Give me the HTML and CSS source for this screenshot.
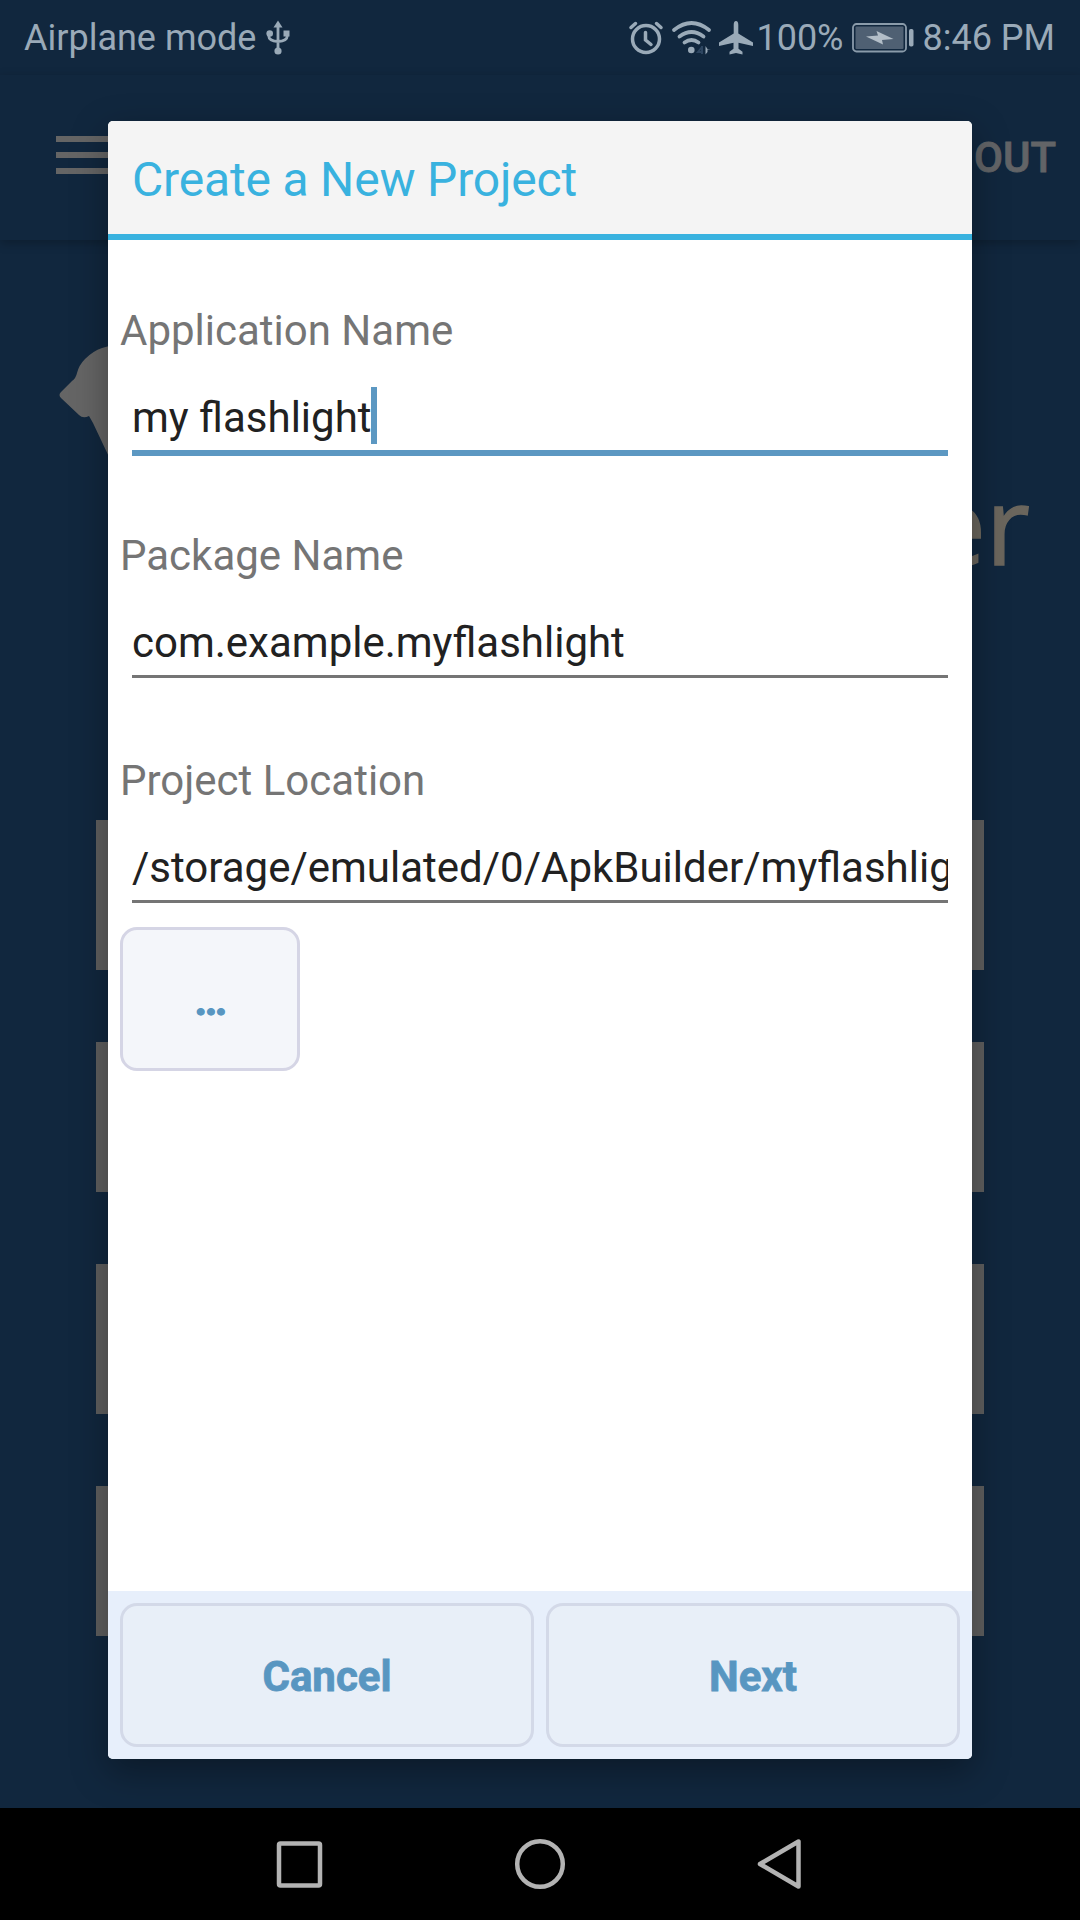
FILE: index.html
```html
<!DOCTYPE html>
<html>
  <head>
    <meta http-equiv="Content-type" content="text/html; charset=utf-8" />
    <meta name="viewport" content="width=device-width" />
    <title>Create a New Project</title>
    <link rel="stylesheet" href="styles.css">
  </head>
  <body>
    <div class="screen">
      <div class="statusbar">
        <span class="carrier">Airplane mode</span>
        <svg class="usb" width="24" height="36" viewBox="0 0 24 36">
          <path d="M12 5V30M2.800 13v3q0 5 9.200 5.500M21.200 13v3q0 5-9.200 5.500" fill="none" stroke="#9aaab8" stroke-width="2.800"/>
          <path d="M12 .5l4.500 7h-9z"/><circle cx="12" cy="31" r="3.600"/><circle cx="3.700" cy="13.500" r="3.300"/><path d="M17.500 10.500h6v6h-6z"/>
        </svg>
        <div class="spacer"></div>
        <svg class="alarm" width="34" height="34" viewBox="0 0 34 34">
          <g fill="none" stroke="#9aaab8" stroke-linecap="round">
            <circle cx="17" cy="18" r="13.500" stroke-width="3.500"/>
            <path d="M16.500 11.500v7.500l5.500 4.500" stroke-width="3.500"/>
            <path d="M2 6.500l4.500-4M32 6.500l-4.500-4" stroke-width="3.500"/>
          </g>
        </svg>
        <svg class="wifi" width="40" height="34" viewBox="0 0 40 34">
          <g fill="none" stroke="#9aaab8" stroke-width="3.800" stroke-linecap="round">
            <path d="M2 9Q19.500-5 37 9"/><path d="M7.500 15.500q12-9 24 0"/><path d="M12.500 21.500q7-5 14 0"/>
          </g>
          <circle cx="19.300" cy="29" r="3.300"/>
          <path d="M33.500 25v8.500l2-2.500v-2.500h3.500l-3.500-.5z"/>
          <path d="M30 25v8M30 26l-4 5h5" fill="none" stroke="#2d4560" stroke-width="2"/>
        </svg>
        <svg class="plane" width="34" height="34" viewBox="0 0 34 34">
          <path d="M17 0q2.300 0 2.300 4v8.500L34 21.500v3.500l-14.500-3.200v6l4 3V33.500L17 32l-6.500 1.500v-2.700l4-3v-6L0 25v-3.500l14.700-9V4q0-4 2.300-4z"/>
        </svg>
        <span class="percent">100%</span>
        <svg class="battery" width="62" height="30" viewBox="0 0 62 30">
          <rect x="1" y="1" width="53" height="27.500" rx="3.500" fill="none" stroke="#8a9baa" stroke-width="1.800"/>
          <rect x="3.500" y="3.500" width="48" height="22.500" rx="1" fill="#4f6073"/>
          <path d="M14 13.500l12-1-1.500-4.500 17 8-11.500 1 1 4.500z" fill="#b3bec8"/>
          <rect x="57" y="6" width="4.500" height="17.500" rx="1.800"/>
        </svg>
        <span class="clock">8:46 PM</span>
      </div>

      <div class="toolbar">
        <div class="menu"><i></i><i></i><i></i></div>
        <span class="action">OUT</span>
      </div>

      <div class="hero">
        <svg class="logo" width="60" height="130" viewBox="0 0 60 130">
          <path d="M60 -4L42 1Q33 4 25 12Q19 18 17 26Q16 31 12 34L1 45Q-2 48 1 51L19 68Q23 72 29 69L33 76L50 112L60 142z"/>
        </svg>
        <span class="brand">er</span>
      </div>

      <div class="tiles">
        <div class="tile"></div>
        <div class="tile"></div>
        <div class="tile"></div>
        <div class="tile"></div>
      </div>

      <div class="navbar">
        <svg width="52" height="52" viewBox="0 0 52 52"><rect x="5" y="5.500" width="41" height="42" rx="1.500"/></svg>
        <svg width="52" height="52" viewBox="0 0 52 52"><circle cx="26" cy="26" r="22.800"/></svg>
        <svg width="52" height="52" viewBox="0 0 52 52"><path d="M44.500 3.500V48.500L6 26z"/></svg>
      </div>

      <!-- new project dialog -->
      <div class="dialog">
        <div class="dialog-title">Create a New Project</div>
        <div class="dialog-body">
          <div class="field">
            <div class="label">Application Name</div>
            <div class="input focus">my flashlight<span class="caret"></span></div>
          </div>
          <div class="field">
            <div class="label">Package Name</div>
            <div class="input">com.example.myflashlight</div>
          </div>
          <div class="field">
            <div class="label">Project Location</div>
            <div class="input">/storage/emulated/0/ApkBuilder/myflashlig</div>
          </div>
          <button class="browse">...</button>
        </div>
        <div class="dialog-buttons">
          <button>Cancel</button>
          <button>Next</button>
        </div>
      </div>
    </div>
  </body>
</html>
```
FILE: styles.css
```css
/* base */
html,body{margin:0;padding:0;height:100%;}
body {font-family:Roboto, "Liberation Sans", sans-serif;background:#000;}
svg {display:block;flex:none;overflow:visible;}

.screen {position:relative;display:flex;flex-direction:column;width:1080px;height:1920px;overflow:hidden;background:#11273e;}

/* status bar */
.statusbar {display:flex;align-items:center;height:75px;padding:0 25px 0 24px;font-size:36px;color:#9aaab8;fill:#9aaab8;white-space:nowrap;}
.spacer {flex:1;}
.usb {margin-left:10px;}
.wifi {margin-left:9px;}
.plane {margin-left:7px;}
.percent {margin-left:3px;}
.battery {margin-left:8px;}
.clock {margin-left:9px;}

/* toolbar */
.toolbar {display:flex;justify-content:space-between;align-items:flex-start;height:165px;padding:0 24px 0 56px;box-shadow:0 3px 10px rgba(0,0,0,.25);}
.menu {display:flex;flex-direction:column;gap:10px;width:72px;margin-top:61px;}
.menu i {height:6px;background:#656565;}
.action {margin-top:58px;font-size:42px;line-height:50px;font-weight:500;color:#626467;-webkit-text-stroke:.8px #626467;}

.hero {display:flex;justify-content:space-between;height:580px;padding:0 50px 0 60px;}
.logo {margin-top:107px;fill:#656565;}
.brand {margin-top:204px;font-family:"Open Sans", "Noto Sans", sans-serif;font-size:108px;line-height:160px;color:#6b665d;-webkit-text-stroke:1.5px #6b665d;}

.tiles {display:flex;flex-direction:column;gap:72px;height:988px;padding:0 96px;}
.tile {height:150px;background:#5f5f5f;}

.navbar {position:relative;display:flex;justify-content:center;align-items:center;gap:188px;height:112px;background:#000;}
.navbar svg {fill:none;stroke:#b3b3b3;stroke-width:4.5;stroke-linejoin:round;}

/* dialog */
.dialog {position:absolute;left:108px;top:121px;display:flex;flex-direction:column;width:864px;height:1638px;border-radius:5px;overflow:hidden;background:#fff;
	box-shadow:0 12px 36px rgba(0,0,0,.35);}
.dialog-title {height:113px;padding-left:24px;border-bottom:6px solid #39b2df;background:#f4f4f4;font-size:48px;line-height:117px;letter-spacing:-.18px;color:#39b2df;}
.dialog-body {flex:1;padding:66px 12px 0;}
.field {height:225px;}
.label {font-size:42px;line-height:50px;color:#757575;}
.input {display:flex;height:63px;margin:31px 12px 0;border-bottom:3px solid #757575;font-size:42px;line-height:61px;color:#212121;white-space:nowrap;overflow:hidden;}
.focus {border-bottom:6px solid #5c98c2;}
.caret {width:6px;height:57px;margin-left:-1px;background:#5c98c2;}

button {height:144px;margin:0;padding:2px 0 0;border:3px solid #d3d9e8;border-radius:17px;background:#e8eff8;color:#5896c1;font-family:inherit;font-size:42px;font-weight:bold;-webkit-text-stroke:.8px #5896c1;}
.browse {display:block;width:180px;margin-top:-54px;padding:3px 0 0 0;border-color:#d5d5e5;background:#f4f6fa;letter-spacing:-2px;-webkit-text-stroke-width:1.4px;}
.dialog-buttons {display:flex;gap:12px;padding:12px;background:#e7effb;}
.dialog-buttons button {flex:1;}
```
